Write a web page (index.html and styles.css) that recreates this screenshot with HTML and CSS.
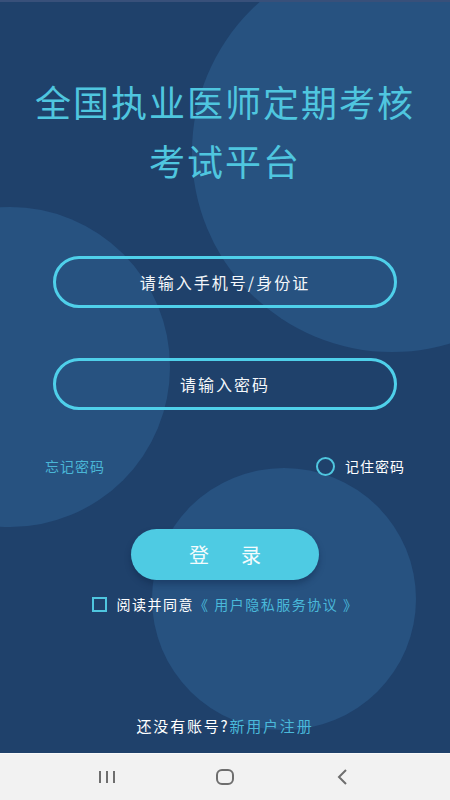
FILE: index.html
```html
<!DOCTYPE html>
<html lang="zh-CN">
<head>
  <meta charset="UTF-8">
  <title>全国执业医师定期考核考试平台</title>
  <link rel="stylesheet" href="styles.css">
</head>
<body>
<div class="screen">
  <div class="main">
    <div class="bubble bubble-top"></div>
    <div class="bubble bubble-left"></div>
    <div class="bubble bubble-bottom"></div>

    <h1 class="title">全国执业医师定期考核<br>考试平台</h1>

    <form class="login-form" onsubmit="return false">
      <input class="field" type="text" name="account" placeholder="请输入手机号/身份证">
      <input class="field field-pwd" type="password" name="password" placeholder="请输入密码">

      <div class="options">
        <a class="forget" href="#">忘记密码</a>
        <label class="remember"><span class="radio"></span>记住密码</label>
      </div>

      <button class="login-btn" type="submit">登&emsp;录</button>

      <div class="agree">
        <span class="checkbox"></span>
        <span>阅读并同意<a href="#" class="link">《 用户隐私服务协议 》</a></span>
      </div>
    </form>

    <div class="register">还没有账号?<a href="#" class="link">新用户注册</a></div>
  </div>

  <div class="navbar">
    <svg width="24" height="24" viewBox="0 0 24 24">
      <path d="M5 6v12M12 6v12M19 6v12" stroke="#6e6e6e" stroke-width="2" fill="none"/>
    </svg>
    <svg width="24" height="24" viewBox="0 0 24 24">
      <rect x="4" y="5" width="16" height="14" rx="5" stroke="#6e6e6e" stroke-width="2" fill="none"/>
    </svg>
    <svg width="24" height="24" viewBox="0 0 24 24">
      <path d="M15 5l-7 7 7 7" stroke="#6e6e6e" stroke-width="2" fill="none"/>
    </svg>
  </div>
</div>
</body>
</html>
```

FILE: styles.css
```css
* {
  box-sizing: border-box;
}

body {
  margin: 0;
  width: 450px;
  height: 800px;
  overflow: hidden;
  font-family: "Noto Sans CJK SC", "Noto Sans", sans-serif;
}

.screen {
  display: flex;
  flex-direction: column;
  height: 800px;
}

.main {
  position: relative;
  overflow: hidden;
  flex: 0 0 753px;
  display: flex;
  flex-direction: column;
  align-items: center;
  background: #1f416b;
  border-top: 2px solid #38507a;
  padding-top: 70px;
  padding-bottom: 17px;
}

.bubble {
  position: absolute;
  border-radius: 50%;
  background: #275280;
}

.bubble-top {
  left: 192px;
  top: -50px;
  width: 400px;
  height: 400px;
}

.bubble-left {
  left: -150px;
  top: 205px;
  width: 320px;
  height: 320px;
}

.bubble-bottom {
  left: 152px;
  top: 466px;
  width: 264px;
  height: 262px;
}

.title {
  position: relative;
  margin: 0;
  font-size: 36px;
  font-weight: 400;
  line-height: 59px;
  letter-spacing: 2px;
  text-align: center;
  color: #4fc6df;
}

.login-form {
  position: relative;
  display: flex;
  flex-direction: column;
  align-items: center;
  width: 100%;
  margin-top: 66px;
}

.field {
  width: 344px;
  height: 52px;
  border: 3px solid #4fd0ea;
  border-radius: 26px;
  background: transparent;
  color: #fff;
  font-family: inherit;
  font-size: 16px;
  letter-spacing: 2px;
  text-align: center;
  outline: none;
}

.field::placeholder {
  color: #f4f7fa;
}

.field-pwd {
  margin-top: 50px;
}

.options {
  display: flex;
  justify-content: space-between;
  align-items: center;
  width: 100%;
  height: 20px;
  margin-top: 46px;
  padding: 0 45px;
  font-size: 14px;
  letter-spacing: 1px;
}

.forget {
  color: #4ab6d6;
  text-decoration: none;
}

.remember {
  display: flex;
  align-items: center;
  gap: 10px;
  color: #fff;
}

.radio {
  width: 19px;
  height: 19px;
  border: 2px solid #4fc6df;
  border-radius: 50%;
}

.login-btn {
  width: 188px;
  height: 51px;
  margin-top: 53px;
  border: none;
  border-radius: 26px;
  background: #4ecbe3;
  color: #f4fbfd;
  font-family: inherit;
  font-size: 20px;
  letter-spacing: 6px;
  text-indent: 6px;
  box-shadow: 0 4px 6px rgba(10, 30, 60, 0.35);
  cursor: pointer;
}

.agree {
  display: flex;
  align-items: center;
  gap: 10px;
  height: 20px;
  margin-top: 14px;
  color: #fff;
  font-size: 14px;
  letter-spacing: 1.5px;
}

.checkbox {
  width: 15px;
  height: 15px;
  border: 2px solid #4fc6df;
}

.link {
  color: #4ab9da;
  text-decoration: none;
}

.register {
  position: relative;
  margin-top: auto;
  height: 20px;
  line-height: 20px;
  color: #fff;
  font-size: 15px;
  letter-spacing: 1.8px;
}

.navbar {
  flex: 1;
  display: flex;
  justify-content: center;
  align-items: center;
  gap: 94px;
  background: #f2f2f2;
  border-top: 1px solid #fafafa;
}
```
